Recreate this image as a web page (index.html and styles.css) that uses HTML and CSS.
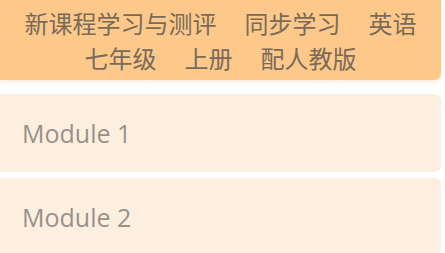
FILE: index.html
```html
<!DOCTYPE html>
<html lang="zh-CN">
  <head>
    <meta charset="UTF-8" />
    <meta name="viewport" content="width=device-width, initial-scale=1" />
    <title>同步学习 英语</title>
    <link rel="stylesheet" href="styles.css">
  </head>
  <body>
    <div class="header">
      <div class="title">新课程学习与测评<span class="sep"></span>同步学习<span class="sep"></span>英语</div>
      <div class="title">七年级<span class="sep"></span>上册<span class="sep"></span>配人教版</div>
    </div>
    <div class="list">
      <div class="item">Module 1</div>
      <div class="item">Module 2</div>
    </div>
  </body>
</html>
```

FILE: styles.css
```css
body {
  background-color: #ffffff;
  margin: 0;
  padding: 0;
  font-family: "Open Sans", "Noto Sans CJK SC", sans-serif;
  overflow: hidden;
}
.header {
  margin-right: 4px;
  padding: 5px 0 5px 0;
  background-color: #fcc98b;
  border-radius: 0 0 7px 0;
  box-shadow: 0 2px 4px rgba(252, 201, 139, 0.35);
}
.title {
  text-align: center;
  font-family: "Noto Sans CJK SC", sans-serif;
  font-size: 24px;
  line-height: 35px;
  color: #7a6b58;
}
.sep {
  display: inline-block;
  width: 28px;
}
.list {
  display: flex;
  flex-direction: column;
  gap: 6px;
  margin-top: 14px;
  margin-right: 4px;
}
.item {
  height: 78px;
  display: flex;
  align-items: center;
  padding-left: 22px;
  background-color: #fdefe0;
  border-radius: 0 6px 6px 0;
  font-size: 25px;
  color: #9a918a;
}
```
